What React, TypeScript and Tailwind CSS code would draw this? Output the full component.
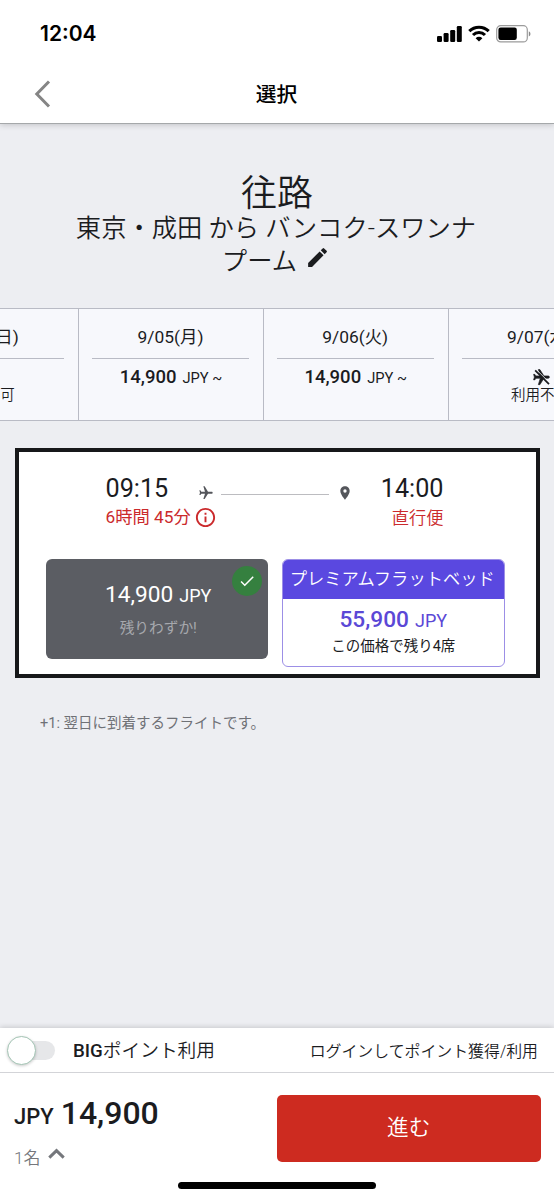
import type { ReactNode } from "react"
import { MdCheck, MdEdit, MdFlight, MdInfoOutline, MdLocationOn } from "react-icons/md"

type Day = {
  date: string
  price?: string
}

const days: Day[] = [
  { date: "9/04(日)" },
  { date: "9/05(月)", price: "14,900" },
  { date: "9/06(火)", price: "14,900" },
  { date: "9/07(水)" },
]

function StatusBar() {
  return (
    <div className="flex h-[64px] items-center justify-between pt-[3px] pl-[40px] pr-[23px]">
      <span className="mt-px font-['Inter',sans-serif] text-[21px] font-semibold text-black">12:04</span>
      <div className="flex items-center">
        <svg width="25" height="16" viewBox="0 0 25 16">
          <rect x="0" y="10" width="5" height="6" rx="1.2" />
          <rect x="6.6" y="7" width="5" height="9" rx="1.2" />
          <rect x="13.2" y="4" width="5" height="12" rx="1.2" />
          <rect x="19.8" y="0" width="5" height="16" rx="1.2" />
        </svg>
        <svg className="ml-[6px]" width="22" height="17" viewBox="0 0 22 17" fill="none" stroke="#000" strokeWidth="3.1">
          <path d="M1.3 6.2 A13.8 13.8 0 0 1 20.7 6.2" />
          <path d="M5 10 A8.6 8.6 0 0 1 17 10" />
          <path d="M11 16.6 L7.6 13.2 A4.9 4.9 0 0 1 14.4 13.2 Z" fill="#000" stroke="none" />
        </svg>
        <svg className="ml-[6px]" width="35" height="18" viewBox="0 0 35 18">
          <rect x="0.7" y="0.7" width="30.6" height="16.2" rx="4" fill="none" stroke="#9b9b9b" strokeWidth="1.2" />
          <rect x="2.4" y="2.6" width="18.4" height="12.4" rx="2.2" />
          <path d="M32.8 6.2 A3 3 0 0 1 32.8 11.6 Z" fill="#8a8a8a" />
        </svg>
      </div>
    </div>
  )
}

function NavBar() {
  return (
    <div className="grid h-[59px] grid-cols-[1fr_auto_1fr] items-center">
      <svg className="ml-[34px]" width="17" height="28" viewBox="0 0 17 28" fill="none" stroke="#858585" strokeWidth="3">
        <path d="M15 1.5 L2.8 14 L15 26.5" />
      </svg>
      <h1 className="mt-[4px] -ml-px text-[20.7px] font-medium text-black">選択</h1>
    </div>
  )
}

function NoFlightIcon() {
  return (
    <svg className="ml-[4px]" width="19" height="19" viewBox="0 0 24 24">
      <path
        transform="rotate(90 12 12)"
        fill="currentColor"
        stroke="currentColor"
        strokeWidth="0.8"
        d="M21 16v-2l-8-5V3.5c0-.83-.67-1.5-1.5-1.5S10 2.67 10 3.5V9l-8 5v2l8-2.5V19l-2 1.5V22l3.5-1 3.5 1v-1.5L13 19v-5.5l8 2.5z"
      />
      <path d="M5.2 1.8 L22.7 19.3" stroke="#f7f8fc" strokeWidth="1.2" />
      <path d="M4 3 L21.5 20.5" stroke="currentColor" strokeWidth="2.2" />
    </svg>
  )
}

function DayCell({ day }: { day: Day }) {
  return (
    <div className="flex h-full w-[184.7px] shrink-0 flex-col items-center border-l border-[#b9bbc5] pt-[9px] pr-[14px] pl-[13px]">
      <div className="flex h-[41px] w-full items-center justify-center border-b border-[#b9bbc5] pb-px text-[17.4px] whitespace-nowrap">
        {day.date}
      </div>
      {day.price ? (
        <div className="mt-[5px] flex items-baseline gap-[6px] pl-px whitespace-nowrap">
          <span className="text-[18.5px] font-medium">{day.price}</span>
          <span className="text-[14.7px]">JPY ~</span>
        </div>
      ) : (
        <div className="mt-[9px] flex flex-col items-center">
          <NoFlightIcon />
          <span className="text-[14.5px] leading-[18px] font-[350] whitespace-nowrap">利用不可</span>
        </div>
      )}
    </div>
  )
}

function Amount({ value, className }: { value: ReactNode; className: string }) {
  return (
    <div className={`flex items-baseline gap-[6px] ${className}`}>
      <span className="text-[22.7px]">{value}</span>
      <span className="text-[18px] font-normal">JPY</span>
    </div>
  )
}

function FlightCard() {
  return (
    <section className="mx-[14.5px] mt-[27px] h-[230px] border-4 border-[#17181a] bg-white px-[27px]">
      {/* Times */}
      <div className="flex items-start justify-between pt-[21px] pr-[65px] pl-[60px]">
        <div className="flex h-[56px] w-[92px] shrink-0 flex-col">
          <span className="text-[25.2px] leading-[32px]">09:15</span>
          <span className="flex items-center gap-[3px] text-[17.3px] leading-[24px] whitespace-nowrap text-[#cb2a2c]">
            6時間 45分
            <MdInfoOutline size={23} className="shrink-0" />
          </span>
        </div>
        <div className="mt-[12px] mr-[28px] flex items-center text-[#54565b]">
          <MdFlight size={16} className="rotate-90" />
          <span className="mx-[7px] mt-[3px] h-px w-[108px] bg-[#bcbcc0]" />
          <MdLocationOn size={16} className="ml-px" />
        </div>
        <div className="flex flex-col items-end">
          <span className="text-[25.2px] leading-[32px]">14:00</span>
          <span className="text-[17.3px] leading-[26px] font-[350] text-[#cb2a2c]">直行便</span>
        </div>
      </div>

      {/* Fares */}
      <div className="mt-[28px] flex items-start gap-[14px]">
        <button className="relative flex h-[100px] w-[222.5px] flex-col items-center rounded-[6px] bg-[#5b5d63] pt-[19px] pl-[3px]">
          <Amount value="14,900" className="text-white" />
          <span className="mt-[2px] text-[14.7px] leading-[28px] text-[#a6a8ad]">残りわずか!</span>
          <span className="absolute top-[7px] right-[6px] flex h-[30px] w-[30px] items-center justify-center rounded-full bg-[#35803f] text-white">
            <MdCheck size={18} />
          </span>
        </button>
        <button className="flex h-[108px] w-[222.5px] flex-col items-center overflow-hidden rounded-[6px] border border-[#9c8fe6] bg-white">
          <span className="flex h-[39px] w-full items-center justify-center bg-[#5a48e0] pr-[2px] text-[17.3px] font-[350] whitespace-nowrap text-white">
            プレミアムフラットベッド
          </span>
          <Amount value="55,900" className="mt-[4px] font-medium text-[#5b48d6]" />
          <span className="text-[14.5px] leading-[20px]">この価格で残り4席</span>
        </button>
      </div>
    </section>
  )
}

function Footer() {
  return (
    <footer className="h-[172px] bg-white shadow-[0_-1px_5px_rgba(0,0,0,0.16)]">
      <div className="flex h-[45px] items-center border-b border-[#d3d4d8] pr-[16px] pl-[7px]">
        <div className="relative h-[29px] w-[48px]">
          <div className="absolute top-[5px] left-[8px] h-[19px] w-[40px] rounded-full bg-[#e6e7e9]" />
          <div className="absolute top-0 left-0 h-[29px] w-[29px] rounded-full border border-[#a3c4b4] bg-white shadow-[0_1px_3px_rgba(0,0,0,0.2)]" />
        </div>
        <span className="mt-[3px] ml-[18px] text-[18.7px] font-[350]">
          <span className="font-medium">BIG</span>ポイント利用
        </span>
        <span className="mt-[4px] ml-auto text-[15.9px] font-[350]">ログインしてポイント獲得/利用</span>
      </div>
      <div className="flex justify-between pt-[22px] pr-[13.5px] pl-[14px]">
        <div>
          <div className="flex items-baseline gap-[7px] font-medium">
            <span className="text-[22px] leading-[36px]">JPY</span>
            <span className="text-[32px] leading-[36px]">14,900</span>
          </div>
          <div className="mt-[10px] flex items-center gap-[8px] text-[17px] leading-[26px] font-[350] text-[#75777c]">
            1名
            <svg className="-mt-[9px]" width="17" height="11" viewBox="0 0 17 11" fill="none" stroke="#75777c" strokeWidth="3">
              <path d="M1.3 9.6 L8.5 2.6 L15.7 9.6" />
            </svg>
          </div>
        </div>
        <button className="h-[67px] w-[263.5px] rounded-[5px] bg-[#cd2b20] pb-px text-[21.7px] font-[350] text-white">
          進む
        </button>
      </div>
      <div className="mx-auto mt-[11px] h-[7px] w-[198px] rounded-full bg-black" />
    </footer>
  )
}

export default function App() {
  return (
    <div className="flex h-[1200px] w-[554px] flex-col overflow-hidden bg-[#edeef2] font-['Roboto','Noto_Sans_CJK_JP',sans-serif] text-[#1b1c1f]">
      <header className="h-[124px] shrink-0 border-b border-[#a5a8aa] bg-white shadow-[0_1px_6px_rgba(0,0,0,0.18)]">
        <StatusBar />
        <NavBar />
      </header>

      <main className="flex-1">
        {/* Route */}
        <div className="h-[184px] pt-[50px] text-center font-[350]">
          <h2 className="text-[36px] leading-[41px]">往路</h2>
          <p className="-mt-[2px] pr-[2px] text-[25.3px] leading-[32px]">
            東京・成田 から バンコク-スワンナ
            <br />
            プーム <MdEdit size={25} className="ml-[2px] inline align-[0px]" />
          </p>
        </div>

        {/* Dates */}
        <div className="h-[113px] overflow-hidden border-y border-[#b9bbc5] bg-[#f7f8fc]">
          <div className="-ml-[106.5px] flex h-full">
            {days.map((day) => (
              <DayCell key={day.date} day={day} />
            ))}
          </div>
        </div>

        <FlightCard />

        <p className="mt-[35px] ml-[40px] text-[14.5px] leading-[22px] text-[#6f7176]">
          +1: 翌日に到着するフライトです。
        </p>
      </main>

      <Footer />
    </div>
  )
}
